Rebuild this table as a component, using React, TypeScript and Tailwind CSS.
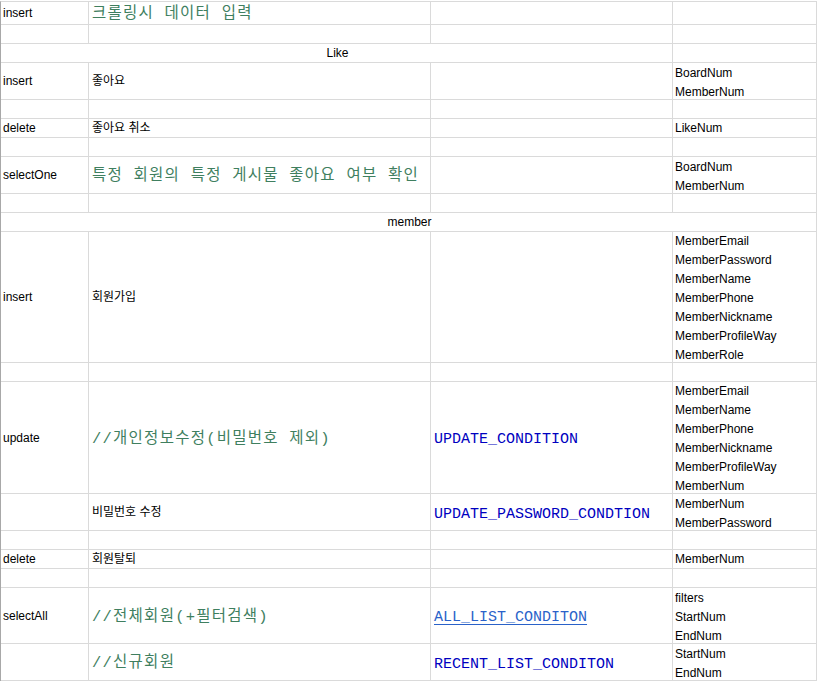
import type { ReactNode } from 'react'

const sans = "font-['Liberation_Sans','Noto_Sans_CJK_KR',sans-serif] text-[12px] text-black"
const comment = "block pt-[4px] font-['Liberation_Mono','Noto_Sans_CJK_KR',monospace] text-[15.5px] tracking-[1.25px] text-[#3f7f5f]"
const constant = "block pt-[6px] font-['Liberation_Mono',monospace] text-[15px] text-[#0000c0]"

function Cell({ w, pl = 'pl-[2px]', center, children }: { w: string; pl?: string; center?: boolean; children?: ReactNode }) {
  return (
    <div className={`${w} ${pl} shrink-0 flex items-center border-r border-b border-[#dadada] whitespace-nowrap ${center ? 'justify-center' : ''}`}>
      {children}
    </div>
  )
}

function Params({ items }: { items: string[] }) {
  return (
    <div className={`flex flex-col ${items.length > 1 ? 'pt-[3px]' : 'pt-[1px]'}`}>
      {items.map(p => (
        <span key={p} className="leading-[19px]">{p}</span>
      ))}
    </div>
  )
}

type RowData = {
  h: string
  op?: string
  desc?: ReactNode
  cond?: ReactNode
  params?: string[]
}

const rows: (RowData | { h: string; merged: string; span: 'three' | 'all' })[] = [
  { h: 'h-[23px]', op: 'insert', desc: <span className={comment}>크롤링시 데이터 입력</span> },
  { h: 'h-[19px]' },
  { h: 'h-[19px]', merged: 'Like', span: 'three' },
  { h: 'h-[37px]', op: 'insert', desc: '좋아요', params: ['BoardNum', 'MemberNum'] },
  { h: 'h-[19px]' },
  { h: 'h-[19px]', op: 'delete', desc: '좋아요 취소', params: ['LikeNum'] },
  { h: 'h-[19px]' },
  { h: 'h-[37px]', op: 'selectOne', desc: <span className={comment}>특정 회원의 특정 게시물 좋아요 여부 확인</span>, params: ['BoardNum', 'MemberNum'] },
  { h: 'h-[19px]' },
  { h: 'h-[19px]', merged: 'member', span: 'all' },
  {
    h: 'h-[131px]',
    op: 'insert',
    desc: '회원가입',
    params: ['MemberEmail', 'MemberPassword', 'MemberName', 'MemberPhone', 'MemberNickname', 'MemberProfileWay', 'MemberRole'],
  },
  { h: 'h-[19px]' },
  {
    h: 'h-[112px]',
    op: 'update',
    desc: <span className={comment}>//개인정보수정(비밀번호 제외)</span>,
    cond: <span className={constant}>UPDATE_CONDITION</span>,
    params: ['MemberEmail', 'MemberName', 'MemberPhone', 'MemberNickname', 'MemberProfileWay', 'MemberNum'],
  },
  {
    h: 'h-[37px]',
    desc: '비밀번호 수정',
    cond: <span className={constant}>UPDATE_PASSWORD_CONDTION</span>,
    params: ['MemberNum', 'MemberPassword'],
  },
  { h: 'h-[19px]' },
  { h: 'h-[19px]', op: 'delete', desc: '회원탈퇴', params: ['MemberNum'] },
  { h: 'h-[19px]' },
  {
    h: 'h-[56px]',
    op: 'selectAll',
    desc: <span className={comment}>//전체회원(+필터검색)</span>,
    cond: (
      <span className="block pt-[6px] font-['Liberation_Mono',monospace] text-[15px] text-[#2a62c9] underline underline-offset-[3px]">
        ALL_LIST_CONDITON
      </span>
    ),
    params: ['filters', 'StartNum', 'EndNum'],
  },
  {
    h: 'h-[37px]',
    desc: <span className={comment}>//신규회원</span>,
    cond: <span className={constant}>RECENT_LIST_CONDITON</span>,
    params: ['StartNum', 'EndNum'],
  },
]

export default function App() {
  return (
    <div className={`w-[817px] h-[682px] bg-white overflow-hidden ${sans}`}>
      <div className="mt-[1px] border-t border-l border-t-[#dadada] border-l-[#a8a8a8] w-[817px]">
        {rows.map((r, i) => {
          if ('merged' in r) {
            return (
              <div key={i} className={`flex ${r.h}`}>
                {r.span === 'three' ? (
                  <>
                    <Cell w="w-[672px]" center>{r.merged}</Cell>
                    <Cell w="w-[144px]" />
                  </>
                ) : (
                  <Cell w="w-[816px]" center>{r.merged}</Cell>
                )}
              </div>
            )
          }
          return (
            <div key={i} className={`flex ${r.h}`}>
              <Cell w="w-[88px]">{r.op}</Cell>
              <Cell w="w-[342px]" pl="pl-[3px]">{r.desc}</Cell>
              <Cell w="w-[242px]" pl="pl-[3px]">{r.cond}</Cell>
              <Cell w="w-[144px]">{r.params && <Params items={r.params} />}</Cell>
            </div>
          )
        })}
      </div>
    </div>
  )
}
